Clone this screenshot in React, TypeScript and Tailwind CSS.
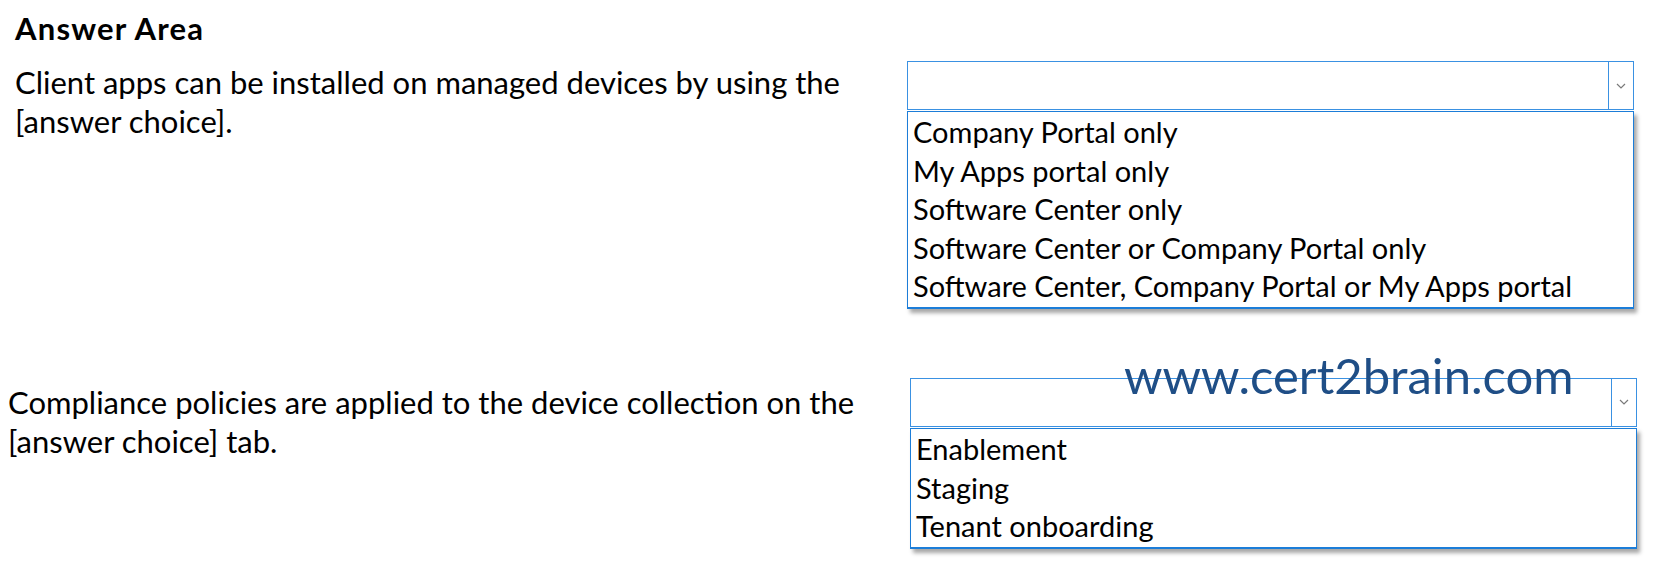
const FONT = "font-['Lato','Open_Sans',sans-serif]";

function Chevron() {
  return (
    <svg width="10" height="6" viewBox="0 0 10 6" className="text-[#7a7a7a]">
      <polyline points="1,1 5,5 9,1" fill="none" stroke="currentColor" strokeWidth="1.2" />
    </svg>
  );
}

function Dropdown({ options }: { options: string[] }) {
  return (
    <div className="w-[727px]">
      {/* closed select box */}
      <div className="h-[49px] flex border border-[#3a91e2] bg-white">
        <div className="flex-1" />
        <div className="w-[25px] border-l border-[#3a91e2] flex items-center justify-center">
          <Chevron />
        </div>
      </div>
      {/* open list */}
      <div className="mt-[1px] border border-b-2 border-[#1c7dd8] bg-white shadow-[3px_4px_4px_rgba(0,0,0,0.35)] pl-[5px] py-[1px]">
        {options.map((o) => (
          <div key={o} className="h-[38.6px] leading-[38.6px] text-[29px] text-black whitespace-nowrap">
            {o}
          </div>
        ))}
      </div>
    </div>
  );
}

export default function App() {
  return (
    <div className={`relative w-[1660px] h-[574px] bg-white overflow-hidden ${FONT}`}>
      {/* Heading */}
      <div className="pl-[15px] pt-[10px] text-[31px] font-bold tracking-[1.2px] leading-[36px] text-black">
        Answer Area
      </div>

      {/* Question 1 */}
      <div className="flex mt-[15px]">
        <div className="w-[907px] pl-[15px] pt-[2px] text-[31px] leading-[39px] text-black whitespace-nowrap">
          <div>Client apps can be installed on managed devices by using the</div>
          <div>[answer choice].</div>
        </div>
        <Dropdown
          options={[
            "Company Portal only",
            "My Apps portal only",
            "Software Center only",
            "Software Center or Company Portal only",
            "Software Center, Company Portal or My Apps portal",
          ]}
        />
      </div>

      {/* Question 2 */}
      <div className="flex mt-[69px]">
        <div className="w-[910px] pl-[8px] pt-[5px] text-[31px] leading-[39px] text-black whitespace-nowrap">
          <div>Compliance policies are applied to the device collection on the</div>
          <div>[answer choice] tab.</div>
        </div>
        <Dropdown options={["Enablement", "Staging", "Tenant onboarding"]} />
      </div>

      {/* Watermark */}
      <div className="absolute left-[1124px] top-[347px] text-[49px] leading-[56px] text-[#1f4e86]">
        www.cert2brain.com
      </div>
    </div>
  );
}
